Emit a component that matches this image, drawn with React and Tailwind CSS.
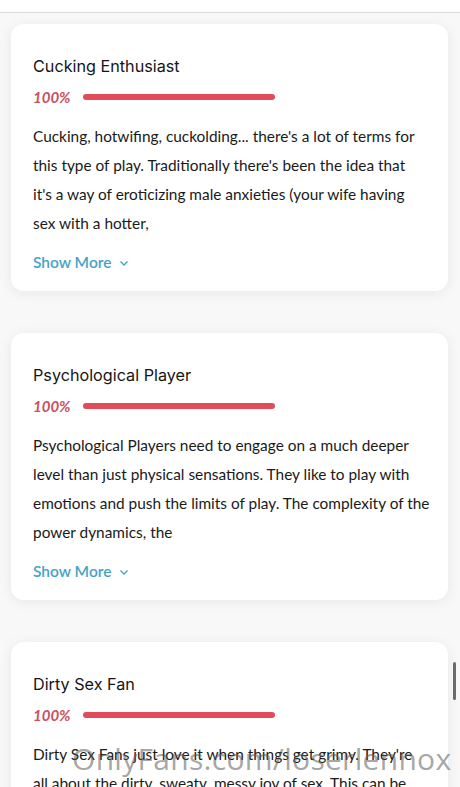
import React from "react";

const cards = [
  {
    title: "Cucking Enthusiast",
    lines: [
      "Cucking, hotwifing, cuckolding... there's a lot of terms for",
      "this type of play. Traditionally there's been the idea that",
      "it's a way of eroticizing male anxieties (your wife having",
      "sex with a hotter,",
    ],
  },
  {
    title: "Psychological Player",
    lines: [
      "Psychological Players need to engage on a much deeper",
      "level than just physical sensations. They like to play with",
      "emotions and push the limits of play. The complexity of the",
      "power dynamics, the",
    ],
  },
  {
    title: "Dirty Sex Fan",
    lines: [
      "Dirty Sex Fans just love it when things get grimy. They're",
      "all about the dirty, sweaty, messy joy of sex. This can be",
      "anything from getting down in the mud to the smells and",
      "tastes of",
    ],
  },
];

function Card({ title, lines }) {
  return (
    <div className="bg-white rounded-[13px] shadow-[0_2px_14px_rgba(0,0,0,0.07)] pl-[22px] pr-[18px] pt-[30px] pb-[16px]">
      <h3 className="text-[16.2px] leading-6 text-[#151515] font-['Inter',sans-serif]">{title}</h3>
      <div className="flex items-center mt-[11px] h-4">
        <span className="text-[15px] font-bold italic text-[#c9505e] font-['Lato',sans-serif] w-[50px]">100%</span>
        <div className="h-[6px] w-[192px] rounded-full bg-[#e24c59]" />
      </div>
      <p className="mt-[17px] text-[15.4px] leading-[29px] text-[#1a1a1a] font-['Lato',sans-serif]">
        {lines.map((l, i) => (
          <span key={i} className="block whitespace-nowrap">{l}</span>
        ))}
      </p>
      <button className="mt-[13px] flex items-center gap-[8px] h-6 text-[15.5px] font-semibold text-[#45a3c6] font-['Lato',sans-serif]">
        Show More
        <svg width="10" height="7" viewBox="0 0 10 7" fill="none" stroke="#45a3c6" strokeWidth="1.4">
          <path d="M1.5 1.5 L5 5 L8.5 1.5" />
        </svg>
      </button>
    </div>
  );
}

export default function App() {
  return (
    <div className="relative h-[787px] overflow-hidden bg-[#f8f8f8]">
      <div className="h-[13px] bg-white border-b border-[#dcdcdc]" />
      <div className="flex flex-col gap-[42px] pl-[11px] pr-[12px] pt-[11px]">
        {cards.map((c, i) => (
          <Card key={i} {...c} />
        ))}
      </div>
      <div className="absolute right-[4px] top-[662px] w-[3px] h-[38px] rounded-full bg-[#6b6b6b]" />
      <div className="absolute left-[72px] top-[739px] text-[30px] leading-[40px] text-[rgba(90,90,90,0.55)] font-['Open_Sans',sans-serif] tracking-[0.3px] pointer-events-none">
        OnlyFans.com/loserlennox
      </div>
    </div>
  );
}
